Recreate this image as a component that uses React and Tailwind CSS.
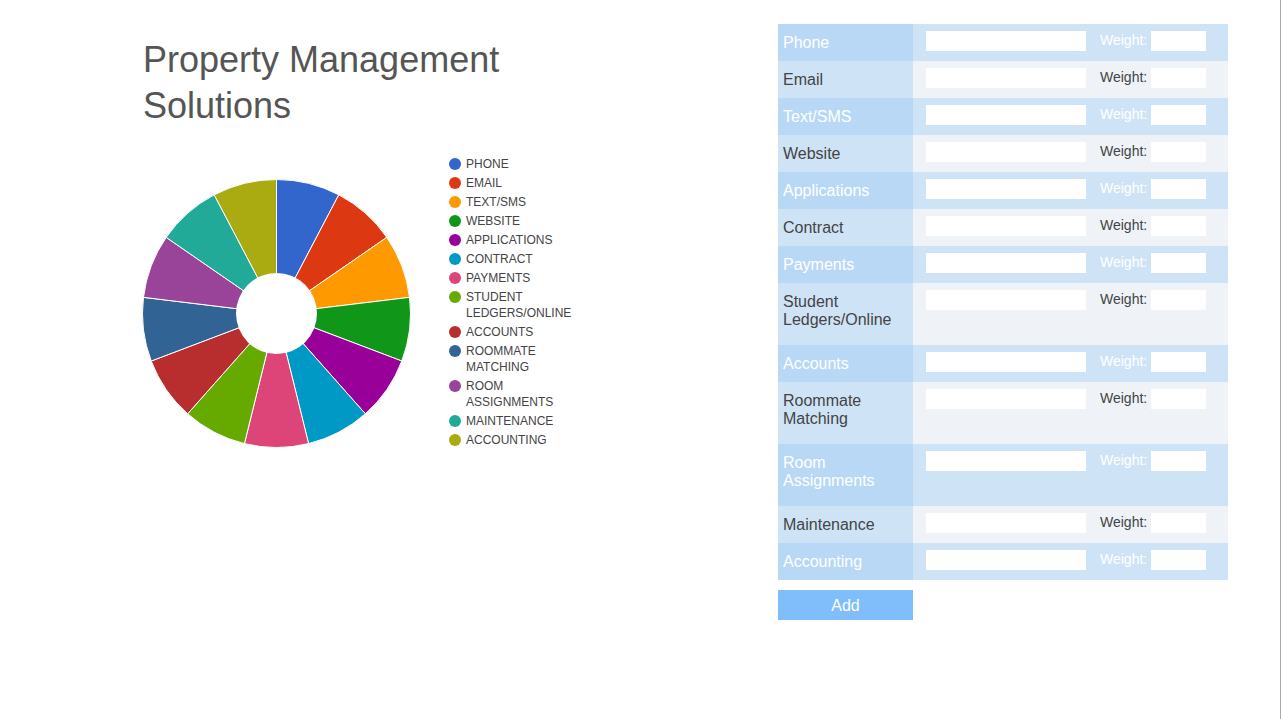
const slices = [
  { label: ['PHONE'], color: '#3366cc' },
  { label: ['EMAIL'], color: '#dc3912' },
  { label: ['TEXT/SMS'], color: '#ff9900' },
  { label: ['WEBSITE'], color: '#109618' },
  { label: ['APPLICATIONS'], color: '#990099' },
  { label: ['CONTRACT'], color: '#0099c6' },
  { label: ['PAYMENTS'], color: '#dd4477' },
  { label: ['STUDENT', 'LEDGERS/ONLINE'], color: '#66aa00' },
  { label: ['ACCOUNTS'], color: '#b82e2e' },
  { label: ['ROOMMATE', 'MATCHING'], color: '#316395' },
  { label: ['ROOM', 'ASSIGNMENTS'], color: '#994499' },
  { label: ['MAINTENANCE'], color: '#22aa99' },
  { label: ['ACCOUNTING'], color: '#aaaa11' },
];

const rows = [
  { name: ['Phone'], h: 'h-[37px]' },
  { name: ['Email'], h: 'h-[37px]' },
  { name: ['Text/SMS'], h: 'h-[37px]' },
  { name: ['Website'], h: 'h-[37px]' },
  { name: ['Applications'], h: 'h-[37px]' },
  { name: ['Contract'], h: 'h-[37px]' },
  { name: ['Payments'], h: 'h-[37px]' },
  { name: ['Student', 'Ledgers/Online'], h: 'h-[62px]' },
  { name: ['Accounts'], h: 'h-[37px]' },
  { name: ['Roommate', 'Matching'], h: 'h-[62px]' },
  { name: ['Room', 'Assignments'], h: 'h-[62px]' },
  { name: ['Maintenance'], h: 'h-[37px]' },
  { name: ['Accounting'], h: 'h-[37px]' },
];

function slicePath(i, n, cx, cy, r) {
  const a0 = (i / n) * Math.PI * 2 - Math.PI / 2;
  const a1 = ((i + 1) / n) * Math.PI * 2 - Math.PI / 2;
  const x0 = cx + r * Math.cos(a0);
  const y0 = cy + r * Math.sin(a0);
  const x1 = cx + r * Math.cos(a1);
  const y1 = cy + r * Math.sin(a1);
  return `M${cx},${cy} L${x0},${y0} A${r},${r} 0 0 1 ${x1},${y1} Z`;
}

function DonutChart() {
  const cx = 134.5;
  const cy = 134.5;
  return (
    <svg width="269" height="269" viewBox="0 0 269 269" className="shrink-0">
      {slices.map((s, i) => (
        <path key={i} d={slicePath(i, slices.length, cx, cy, 134)} fill={s.color} stroke="#ffffff" strokeWidth="1" />
      ))}
      <circle cx={cx} cy={cy} r="40.5" fill="#ffffff" />
    </svg>
  );
}

export default function App() {
  return (
    <div className="flex min-h-screen w-[1281px] border-r border-[#a9a9a9] bg-white font-['Liberation_Sans',Arial,sans-serif]">
      <div className="w-[778px] shrink-0 pl-[143px] pt-[37px]">
        <h1 className="w-[400px] text-[36px] leading-[46px] font-normal text-[#555555]">
          Property Management Solutions
        </h1>

        <div className="mt-[26px] flex items-start">
          <div className="mt-[24px] -ml-[1px]">
            <DonutChart />
          </div>
          <ul className="mt-[1px] ml-[38px] flex flex-col gap-[3px]">
            {slices.map((s, i) => (
              <li key={i} className="flex items-start">
                <span className="mt-[2px] h-[12px] w-[12px] shrink-0 rounded-full" style={{ backgroundColor: s.color }} />
                <span className="ml-[5px] text-[12px] leading-[16px] whitespace-nowrap text-[#444444]">
                  {s.label.map((line, j) => (
                    <span key={j} className="block">
                      {line}
                    </span>
                  ))}
                </span>
              </li>
            ))}
          </ul>
        </div>
      </div>

      <div className="pt-[24px]">
        <div className="flex w-[450px] flex-col">
          {rows.map((row, i) => {
            const odd = i % 2 === 0;
            return (
              <div key={i} className={`flex ${row.h}`}>
                <div
                  className={`w-[135px] shrink-0 pl-[5px] pt-[10px] text-[16px] leading-[18px] ${
                    odd ? 'bg-[#b9d8f6] text-white' : 'bg-[#cfe3f7] text-[#444444]'
                  }`}
                >
                  {row.name.map((line, j) => (
                    <div key={j}>{line}</div>
                  ))}
                </div>
                <div className={`flex flex-1 items-start pl-[13px] pt-[7px] ${odd ? 'bg-[#cfe3f7]' : 'bg-[#eff3f8]'}`}>
                  <input type="text" className="h-[20px] w-[160px] border-0 bg-white outline-none" />
                  <span
                    className={`ml-[14px] text-[14px] leading-[18px] ${odd ? 'text-white' : 'text-[#444444]'}`}
                  >
                    Weight:
                  </span>
                  <input type="text" className="ml-[4px] h-[20px] w-[55px] border-0 bg-white outline-none" />
                </div>
              </div>
            );
          })}
        </div>
        <button
          type="button"
          className="mt-[10px] h-[30px] w-[135px] bg-[#80bdfb] pt-[2px] text-[16px] leading-[18px] text-white"
        >
          Add
        </button>
      </div>
    </div>
  );
}
